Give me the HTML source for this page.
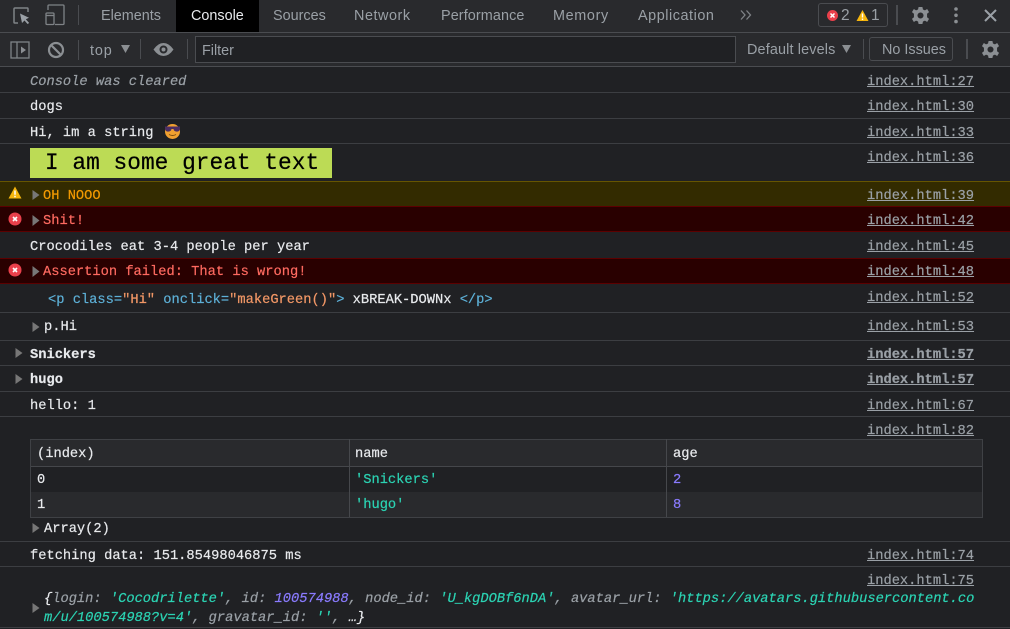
<!DOCTYPE html>
<html><head><meta charset="utf-8"><style>
html,body{margin:0;padding:0;background:#202124;width:1010px;height:629px;overflow:hidden}
#r{position:relative;width:1010px;height:629px;overflow:hidden;background:#202124}
#r div,#r span.a,#r svg{position:absolute}
.t{font:14.4px/20px "Liberation Sans",sans-serif;color:#9aa0a6;white-space:nowrap}
.m{font:13.73px/18px "Liberation Mono",monospace;color:#e8eaed;white-space:pre;-webkit-text-stroke:.2px currentColor}
.l{left:867px;color:#9aa0a6;text-decoration:underline}
.h{left:0;width:1010px;height:1px;background:#3c3e42}
.c{color:#9aa0a6}.b{font-weight:bold}
</style></head><body><div id="r">
<div style="left:0;top:0;width:1010px;height:32px;background:#292a2d"></div>
<div style="left:0;top:33px;width:1010px;height:33px;background:#292a2d"></div>
<div style="left:0;top:32px;width:1010px;height:1px;background:#4a4c50"></div>
<div style="left:0;top:66px;width:1010px;height:1px;background:#4a4c50"></div>
<div style="left:176px;top:0;width:83px;height:32px;background:#000"></div>

<svg style="left:12px;top:6px" width="20" height="20" viewBox="0 0 20 20" fill="none"><path d="M6 17H2.500Q2 17 2 16V3Q2 2 3 2H15.500Q16 2 16 3V6" stroke="#7f8387" stroke-width="1.500"/><path d="M8 7.500L17 11.800L13.800 13.200L17.200 17L15.500 18L12.500 14.500L10 17Z" fill="#9aa0a6"/></svg>
<svg style="left:44px;top:4px" width="22" height="22" viewBox="0 0 22 22" fill="none" stroke="#7f8387" stroke-width="1.300"><path d="M4 6V2Q4 1 5 1H19Q20 1 20 2V19.500Q20 20.500 19 20.500H11"/><rect x="2" y="9" width="8" height="11.500" rx="1"/><path d="M2 11.500H10"/></svg>
<div style="left:78px;top:5px;width:1px;height:20px;background:#4a4c50"></div>
<div class="t" style="left:101px;top:6px">Elements</div>
<div class="t" style="left:191px;top:6px;color:#e8eaed">Console</div>
<div class="t" style="left:273px;top:6px">Sources</div>
<div class="t" style="left:354px;top:6px;letter-spacing:.55px">Network</div>
<div class="t" style="left:441px;top:6px;letter-spacing:.1px">Performance</div>
<div class="t" style="left:553px;top:6px;letter-spacing:.65px">Memory</div>
<div class="t" style="left:638px;top:6px;letter-spacing:.55px">Application</div>
<svg style="left:739px;top:9px" width="14" height="12" viewBox="0 0 14 12" fill="none" stroke="#7f8387" stroke-width="1.300"><path d="M2 1.500L6 6L2 10.500M7.500 1.500L11.500 6L7.500 10.500"/></svg>

<div style="left:818px;top:3px;width:68px;height:22px;border:1px solid #4a4c50;border-radius:3px;padding:0"></div>
<svg style="left:826px;top:9px" width="13" height="13" viewBox="0 0 13 13"><circle cx="6.500" cy="6.500" r="5.500" fill="#e9404b"/><path d="M4.500 4.500L8.500 8.500M8.500 4.500L4.500 8.500" stroke="#fff" stroke-width="1.500"/></svg>
<div class="t" style="left:841px;top:6px;font-size:15.500px">2</div>
<svg style="left:856px;top:9px" width="13" height="13" viewBox="0 0 13 13"><path d="M6.500 1L12.500 12H.5Z" fill="#f5b50e"/><path d="M6.500 4.500V8.500M6.500 9.500V11" stroke="#fff" stroke-width="1.400"/></svg>
<div class="t" style="left:871px;top:6px;font-size:15.500px">1</div>
<div style="left:896px;top:5px;width:2px;height:20px;background:#4a4c50"></div>
<svg style="left:911px;top:6px" width="19" height="19" viewBox="0 0 20 20"><path fill="#8b8f93" fill-rule="evenodd" d="M8 1H12L12.600 3.700L14.700 4.600L17 3.100L19 6.400L16.900 8.100V11.900L19 13.600L17 16.900L14.700 15.400L12.600 16.300L12 19H8L7.400 16.300L5.300 15.400L3 16.900L1 13.600L3.100 11.900V8.100L1 6.400L3 3.100L5.300 4.600L7.400 3.700ZM10 6.800A3.200 3.200 0 1 0 10 13.200A3.200 3.200 0 1 0 10 6.800Z"/></svg>
<svg style="left:952px;top:6px" width="8" height="20" viewBox="0 0 8 20" fill="#8b8f93"><circle cx="4" cy="3" r="1.800"/><circle cx="4" cy="9.300" r="1.800"/><circle cx="4" cy="15.600" r="1.800"/></svg>
<svg style="left:983px;top:8px" width="15" height="15" viewBox="0 0 15 15"><path d="M2 2L13 13M13 2L2 13" stroke="#9aa0a6" stroke-width="2"/></svg>

<svg style="left:10px;top:41px" width="20" height="18" viewBox="0 0 20 18" fill="none" stroke="#7f8387" stroke-width="1.300"><rect x="1" y="1" width="18" height="16"/><path d="M7 1V17"/><path d="M11 5.500L16 9L11 12.500Z" fill="#8b8f93" stroke="none"/></svg>
<svg style="left:47px;top:41px" width="18" height="18" viewBox="0 0 18 18" fill="none" stroke="#8b8f93" stroke-width="2.200"><circle cx="9" cy="9" r="7"/><path d="M4 4L14 14"/></svg>
<div style="left:78px;top:40px;width:1px;height:20px;background:#4a4c50"></div>
<div class="t" style="left:90px;top:41px;letter-spacing:.9px">top</div>
<svg style="left:120px;top:45px" width="11" height="9" viewBox="0 0 11 9"><path d="M1 0H10L5.500 8Z" fill="#8b8f93"/></svg>
<div style="left:140px;top:39px;width:1px;height:20px;background:#4a4c50"></div>
<svg style="left:153px;top:42px" width="21" height="15" viewBox="0 0 21 15"><path fill="#8b8f93" fill-rule="evenodd" d="M.5 7.500Q5 1 10.500 1T20.500 7.500Q16 14 10.500 14T.5 7.500ZM10.500 3.500A4 4 0 1 0 10.500 11.500A4 4 0 1 0 10.500 3.500ZM10.500 5.500A2 2 0 1 1 10.500 9.500A2 2 0 1 1 10.500 5.500Z"/></svg>
<div style="left:187px;top:39px;width:1px;height:20px;background:#4a4c50"></div>
<div style="left:195px;top:36px;width:539px;height:25px;background:#202124;border:1px solid #4a4c50"></div>
<div class="t" style="left:202px;top:41px">Filter</div>
<div class="t" style="left:747px;top:40px;letter-spacing:.15px">Default levels</div>
<svg style="left:841px;top:45px" width="11" height="9" viewBox="0 0 11 9"><path d="M1 0H10L5.500 8Z" fill="#8b8f93"/></svg>
<div style="left:863px;top:39px;width:1px;height:20px;background:#4a4c50"></div>
<div style="left:869px;top:37px;width:82px;height:22px;border:1px solid #4a4c50;border-radius:3px"></div>
<div class="t" style="left:882px;top:40px">No Issues</div>
<div style="left:966px;top:39px;width:2px;height:20px;background:#4a4c50"></div>
<svg style="left:981px;top:40px" width="19" height="19" viewBox="0 0 20 20"><path fill="#8b8f93" fill-rule="evenodd" d="M8 1H12L12.600 3.700L14.700 4.600L17 3.100L19 6.400L16.900 8.100V11.900L19 13.600L17 16.900L14.700 15.400L12.600 16.300L12 19H8L7.400 16.300L5.300 15.400L3 16.900L1 13.600L3.100 11.900V8.100L1 6.400L3 3.100L5.300 4.600L7.400 3.700ZM10 6.800A3.200 3.200 0 1 0 10 13.200A3.200 3.200 0 1 0 10 6.800Z"/></svg>

<div style="left:0;top:181px;width:1010px;height:25px;background:#332b00;border-top:1px solid #665500"></div>
<div style="left:0;top:206px;width:1010px;height:26px;background:#290000;border-top:1px solid #5c0000;border-bottom:1px solid #5c0000;box-sizing:border-box"></div>
<div style="left:0;top:258px;width:1010px;height:26px;background:#290000;border-top:1px solid #5c0000;border-bottom:1px solid #5c0000;box-sizing:border-box"></div>
<div class="h" style="top:92px"></div><div class="h" style="top:118px"></div><div class="h" style="top:143px"></div>
<div class="h" style="top:312px"></div><div class="h" style="top:340px"></div><div class="h" style="top:365px"></div><div class="h" style="top:391px"></div><div class="h" style="top:416px"></div><div class="h" style="top:541px"></div><div class="h" style="top:566px"></div><div class="h" style="top:627px"></div>

<div class="m" style="left:30px;top:74px;color:#9aa0a6;font-style:italic">Console was cleared</div><div class="m l" style="top:74px">index.html:27</div>
<div class="m" style="left:30px;top:99px">dogs</div><div class="m l" style="top:99px">index.html:30</div>
<div class="m" style="left:30px;top:125px">Hi, im a string</div><div class="m l" style="top:125px">index.html:33</div>
<svg style="left:164px;top:123px" width="17" height="16" viewBox="0 0 17 16"><circle cx="8.500" cy="8.500" r="7.500" fill="#f0a030"/><path d="M1 3.500H16V5.500L15 8Q12.500 9.500 10 7.500L9.500 6H7.500L7 7.500Q4.500 9.500 2 8L1 5.500Z" fill="#4b2e63"/><path d="M5 11.500Q8.500 13.500 12 11.500" stroke="#7a4a10" fill="none"/></svg>
<div style="left:30px;top:148px;width:302px;height:30px;background:#bcdb55"></div>
<div class="m" style="left:45px;top:149px;font-size:22.850px;line-height:29px;color:#000">I am some great text</div>
<div class="m l" style="top:150px">index.html:36</div>

<svg style="left:8px;top:186px" width="14" height="13" viewBox="0 0 14 13"><path d="M7 .5L13.500 12.500H.5Z" fill="#f5b50e"/><path d="M7 4.500V8.800M7 9.800V11.300" stroke="#fff" stroke-width="1.500"/></svg>
<svg style="left:32px;top:190px" width="8" height="10" viewBox="0 0 8 10"><path d="M.5 0L7.500 5L.5 10Z" fill="#777"/></svg>
<div class="m" style="left:43px;top:188px;color:#f29900">OH NOOO</div><div class="m l" style="top:188px">index.html:39</div>
<svg style="left:8px;top:212px" width="14" height="14" viewBox="0 0 14 14"><circle cx="7" cy="7" r="6.500" fill="#e9404b"/><path d="M5 5L9 9M9 5L5 9" stroke="#fff" stroke-width="1.600"/></svg>
<svg style="left:32px;top:215px" width="8" height="11" viewBox="0 0 8 11"><path d="M.5 0L7.500 5.500L.5 11Z" fill="#777"/></svg>
<div class="m" style="left:43px;top:213px;color:#ff6a60">Shit!</div><div class="m l" style="top:213px">index.html:42</div>
<div class="m" style="left:30px;top:239px">Crocodiles eat 3-4 people per year</div><div class="m l" style="top:239px">index.html:45</div>
<svg style="left:8px;top:263px" width="14" height="14" viewBox="0 0 14 14"><circle cx="7" cy="7" r="6.500" fill="#e9404b"/><path d="M5 5L9 9M9 5L5 9" stroke="#fff" stroke-width="1.600"/></svg>
<svg style="left:32px;top:266px" width="8" height="11" viewBox="0 0 8 11"><path d="M.5 0L7.500 5.500L.5 11Z" fill="#777"/></svg>
<div class="m" style="left:43px;top:264px;color:#ff6a60">Assertion failed: That is wrong!</div><div class="m l" style="top:264px">index.html:48</div>
<div class="m" style="left:48px;top:292px"><span style="color:#5db0d7">&lt;p class</span><span style="color:#5db0d7">=</span><span style="color:#f29766">"Hi"</span> <span style="color:#5db0d7">onclick=</span><span style="color:#f29766">"makeGreen()"</span><span style="color:#5db0d7">&gt;</span> xBREAK-DOWNx <span style="color:#5db0d7">&lt;/p&gt;</span></div><div class="m l" style="top:290px">index.html:52</div>
<svg style="left:32px;top:322px" width="8" height="10" viewBox="0 0 8 10"><path d="M.5 0L7.500 5L.5 10Z" fill="#777"/></svg>
<div class="m" style="left:44px;top:319px">p.Hi</div><div class="m l" style="top:319px">index.html:53</div>
<svg style="left:15px;top:348px" width="8" height="10" viewBox="0 0 8 10"><path d="M.5 0L7.500 5L.5 10Z" fill="#777"/></svg>
<div class="m b" style="left:30px;top:347px">Snickers</div><div class="m l b" style="top:347px">index.html:57</div>
<svg style="left:15px;top:374px" width="8" height="10" viewBox="0 0 8 10"><path d="M.5 0L7.500 5L.5 10Z" fill="#777"/></svg>
<div class="m b" style="left:30px;top:372px">hugo</div><div class="m l b" style="top:372px">index.html:57</div>
<div class="m" style="left:30px;top:398px">hello: 1</div><div class="m l" style="top:398px">index.html:67</div>
<div class="m l" style="top:423px">index.html:82</div>

<div style="left:30px;top:439px;width:951px;height:77px;border:1px solid #3f4145"></div>
<div style="left:31px;top:440px;width:951px;height:26px;background:#292a2d;border-bottom:1px solid #45474b"></div>
<div style="left:31px;top:492px;width:951px;height:25px;background:#292a2d"></div>
<div style="left:349px;top:439px;width:1px;height:78px;background:#46484c"></div>
<div style="left:666px;top:439px;width:1px;height:78px;background:#46484c"></div>
<div class="m" style="left:37px;top:446px">(index)</div><div class="m" style="left:355px;top:446px">name</div><div class="m" style="left:673px;top:446px">age</div>
<div class="m" style="left:37px;top:472px">0</div><div class="m" style="left:355px;top:472px;color:#2bd3b3">'Snickers'</div><div class="m" style="left:673px;top:472px;color:#8a7bff">2</div>
<div class="m" style="left:37px;top:497px">1</div><div class="m" style="left:355px;top:497px;color:#2bd3b3">'hugo'</div><div class="m" style="left:673px;top:497px;color:#8a7bff">8</div>
<svg style="left:32px;top:523px" width="8" height="10" viewBox="0 0 8 10"><path d="M.5 0L7.500 5L.5 10Z" fill="#777"/></svg>
<div class="m" style="left:44px;top:521px">Array(2)</div>
<div class="m" style="left:30px;top:548px">fetching data: 151.85498046875 ms</div><div class="m l" style="top:548px">index.html:74</div>
<div class="m l" style="top:573px">index.html:75</div>
<svg style="left:32px;top:603px" width="8" height="10" viewBox="0 0 8 10"><path d="M.5 0L7.500 5L.5 10Z" fill="#777"/></svg>
<div class="m" style="left:44px;top:591px;font-style:italic;color:#e8eaed">{<span class="c">login</span><span class="c">:</span> <span style="color:#2bd3b3">'Cocodrilette'</span><span class="c">,</span> <span class="c">id:</span> <span style="color:#8a7bff">100574988</span><span class="c">,</span> <span class="c">node_id:</span> <span style="color:#2bd3b3">'U_kgDOBf6nDA'</span><span class="c">,</span> <span class="c">avatar_url:</span> <span style="color:#2bd3b3">'https://avatars.githubusercontent.co</span></div>
<div class="m" style="left:44px;top:610px;font-style:italic;color:#e8eaed"><span style="color:#2bd3b3">m/u/100574988?v=4'</span><span class="c">,</span> <span class="c">gravatar_id:</span> <span style="color:#2bd3b3">''</span><span class="c">,</span> …}</div>
</div></body></html>
